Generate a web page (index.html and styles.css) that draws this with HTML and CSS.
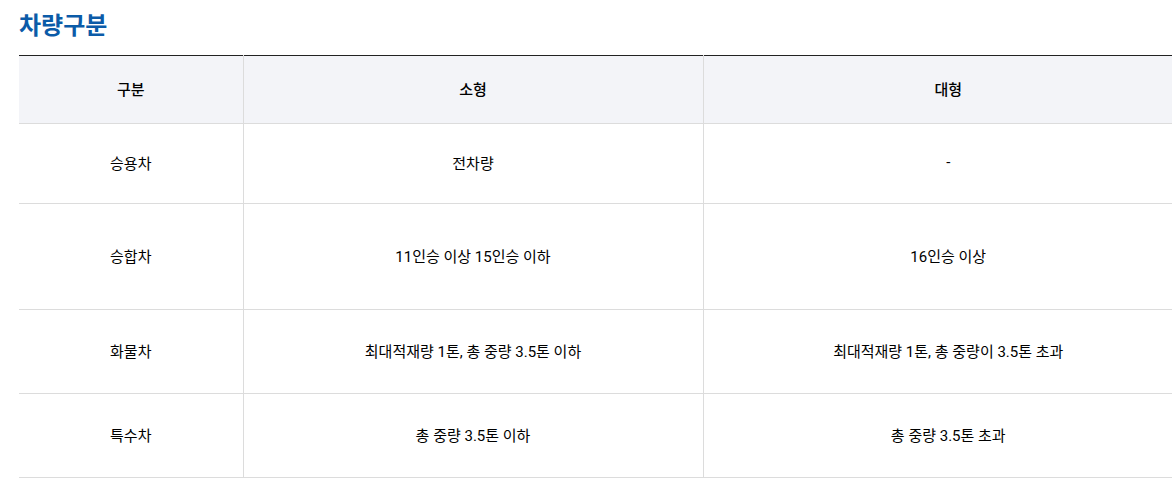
FILE: index.html
```html
<!DOCTYPE html>
<html lang="ko">
<head>
<meta charset="utf-8">
<link rel="stylesheet" href="styles.css">
</head>
<body>
<div class="page">
  <h2 class="title">차량구분</h2>
  <table class="spec">
    <colgroup>
      <col class="c1"><col class="c2"><col class="c3">
    </colgroup>
    <thead>
      <tr class="r-head"><th>구분</th><th>소형</th><th>대형</th></tr>
    </thead>
    <tbody>
      <tr class="r1"><td>승용차</td><td>전차량</td><td>-</td></tr>
      <tr class="r2"><td>승합차</td><td>11인승 이상 15인승 이하</td><td>16인승 이상</td></tr>
      <tr class="r3"><td>화물차</td><td>최대적재량 1톤, 총 중량 3.5톤 이하</td><td>최대적재량 1톤, 총 중량이 3.5톤 초과</td></tr>
      <tr class="r3"><td>특수차</td><td>총 중량 3.5톤 이하</td><td>총 중량 3.5톤 초과</td></tr>
    </tbody>
  </table>
</div>
</body>
</html>
```

FILE: styles.css
```css
html, body {
  margin: 0;
  padding: 0;
  background: #fff;
  overflow: hidden;
}
.page {
  padding: 8px 0 0 19px;
  font-family: Roboto, "Noto Sans CJK KR", sans-serif;
  color: #000;
}
.title {
  margin: 0 0 15px 0;
  font-family: "Noto Sans CJK KR", sans-serif;
  font-size: 24px;
  line-height: 32px;
  font-weight: 700;
  color: #0b5ba8;
}
.spec {
  width: 1174px;
  border-collapse: collapse;
  table-layout: fixed;
  border-top: 1px solid #222;
  font-size: 15px;
}
.c1 { width: 224px; }
.c2 { width: 460px; }
.c3 { width: 490px; }
.spec th, .spec td {
  text-align: center;
  vertical-align: middle;
  padding: 0 0 3px 0;
  border-bottom: 1px solid #dcdcdc;
  border-left: 1px solid #dcdcdc;
}
.spec th:first-child, .spec td:first-child { border-left: none; }
.spec th {
  background: #f3f4f8;
  font-weight: 500;
}
.r-head { height: 68px; }
.r1 { height: 80px; }
.r2 { height: 106px; }
.r3 { height: 84px; }
```
